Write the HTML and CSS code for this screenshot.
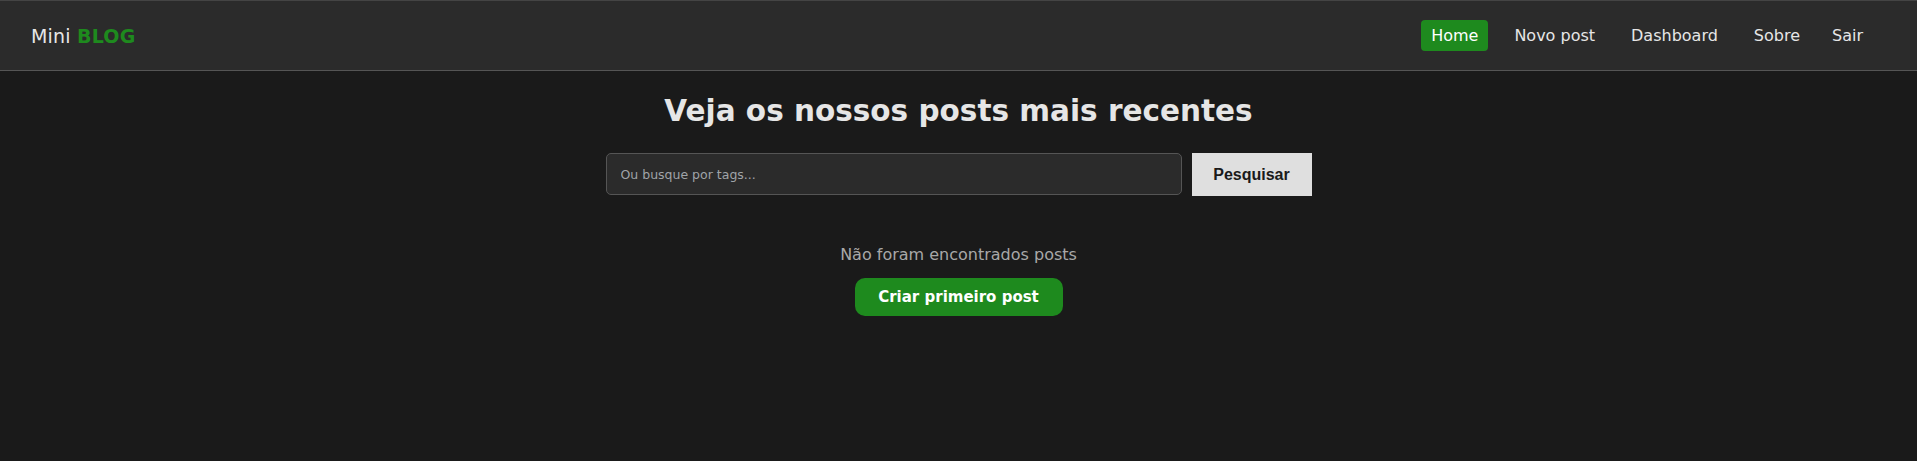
FILE: index.html
```html
<!DOCTYPE html>
<html lang="pt">
<head>
<meta charset="utf-8">
<title>Mini Blog</title>
<link rel="stylesheet" href="styles.css">
</head>
<body>
<nav class="navbar">
  <a class="brand" href="#">Mini <span class="brand-strong">BLOG</span></a>
  <ul class="nav-links">
    <li><a class="nav-link active" href="#">Home</a></li>
    <li><a class="nav-link" href="#">Novo post</a></li>
    <li><a class="nav-link" href="#">Dashboard</a></li>
    <li><a class="nav-link" href="#">Sobre</a></li>
    <li><button class="nav-link logout">Sair</button></li>
  </ul>
</nav>
<main class="home">
  <h1 class="title">Veja os nossos posts mais recentes</h1>
  <form class="search-form">
    <input class="search-input" type="text" placeholder="Ou busque por tags...">
    <button class="search-btn" type="button">Pesquisar</button>
  </form>
  <div class="no-posts">
    <p class="no-posts-text">Não foram encontrados posts</p>
    <a class="btn-create" href="#">Criar primeiro post</a>
  </div>
</main>
</body>
</html>
```

FILE: styles.css
```css
* { box-sizing: border-box; }
html, body { margin: 0; padding: 0; }
body {
  background: #1a1a1a;
  color: #e6e6e6;
  font-family: "DejaVu Sans", "Noto Sans", sans-serif;
  height: 461px;
}
.navbar {
  display: flex;
  justify-content: space-between;
  align-items: center;
  height: 71px;
  background: #2b2b2b;
  border-top: 1px solid #444;
  border-bottom: 1px solid #555;
  padding: 0 44px 0 31px;
}
.brand {
  color: #e6e6e6;
  text-decoration: none;
  font-size: 19px;
  letter-spacing: 0.2px;
}
.brand-strong {
  color: #1e8a1e;
  font-weight: bold;
}
.nav-links {
  display: flex;
  align-items: center;
  gap: 16px;
  list-style: none;
  margin: 0;
  padding: 0;
}
.nav-link {
  display: block;
  color: #e6e6e6;
  text-decoration: none;
  font-size: 16px;
  letter-spacing: 0;
  padding: 6px 10px;
  border-radius: 4px;
  line-height: 19px;
}
.nav-link.active {
  background: #1e8a1e;
  color: #fff;
}
.logout {
  background: none;
  border: none;
  font-family: inherit;
  cursor: pointer;
  padding: 6px 10px 6px 6px;
}
.home {
  display: flex;
  flex-direction: column;
  align-items: center;
}
.title {
  margin: 20px 0 0;
  font-size: 29.5px;
  line-height: 40px;
  font-weight: bold;
  color: #e6e6e6;
}
.search-form {
  display: flex;
  gap: 10px;
  margin-top: 22px;
}
.search-input {
  width: 576px;
  height: 42px;
  background: #2b2b2b;
  border: 1px solid #555;
  border-radius: 5px;
  padding: 0 14px;
  color: #e6e6e6;
  font-family: "DejaVu Sans", sans-serif;
  font-size: 12.5px;
}
.search-input::placeholder { color: #a0a4a8; }
.search-btn {
  width: 120px;
  height: 43px;
  background: #dfdfdf;
  border: none;
  border-radius: 0;
  font-family: "Liberation Sans", Arial, sans-serif;
  font-weight: bold;
  font-size: 16px;
  color: #1a1a1a;
}
.no-posts {
  display: flex;
  flex-direction: column;
  align-items: center;
  margin-top: 49px;
}
.no-posts-text {
  margin: 0;
  font-size: 16px;
  line-height: 20px;
  color: #a8a8a8;
}
.btn-create {
  margin-top: 13px;
  display: flex;
  align-items: center;
  justify-content: center;
  width: 208px;
  height: 38px;
  background: #1e8a1e;
  color: #fff;
  font-weight: bold;
  font-size: 15px;
  text-decoration: none;
  border-radius: 10px;
}
```
